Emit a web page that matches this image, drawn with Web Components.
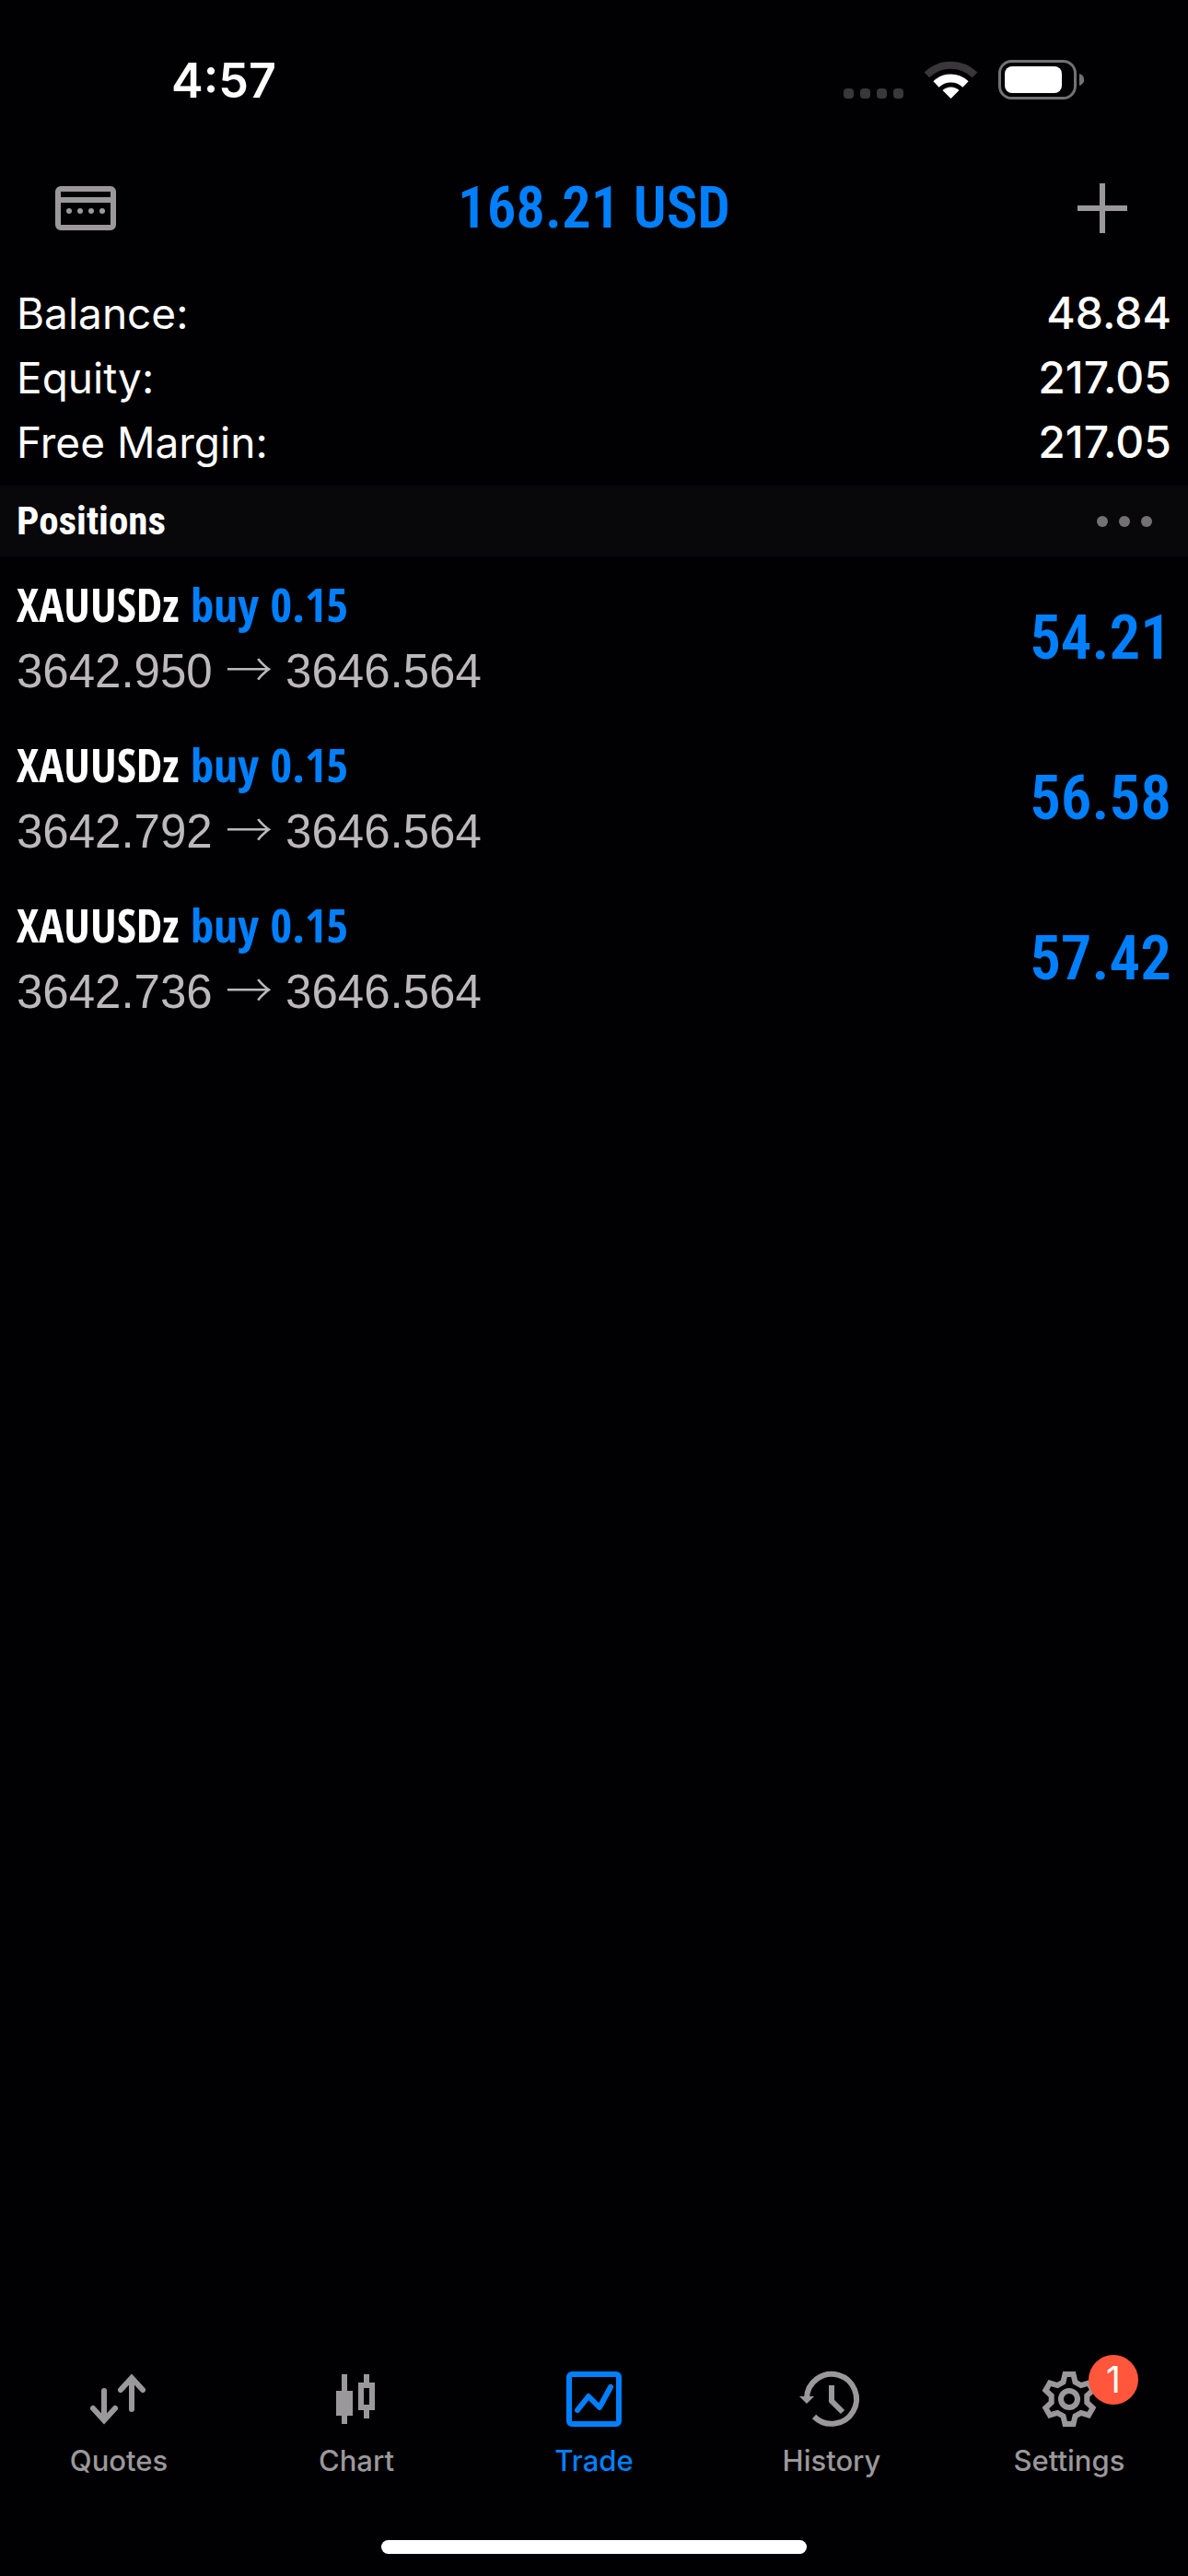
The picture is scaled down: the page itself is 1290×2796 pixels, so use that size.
<!DOCTYPE html>
<html lang="en">
<head>
  <meta charset="utf-8">
  <meta name="viewport" content="width=device-width, initial-scale=1">
  <title>Trade</title>
  <style>
    body {
      --bg: #010002;
      --bar: #08070a;
      --fg: #fff;
      --muted: #9a989b;
      --price: #bcb9bc;
      --accent: #0080ff;
      --badge: #ff563c;
      --side: 18px;
      --ui: Inter, "Liberation Sans", sans-serif;
      --condensed: "Open Sans Condensed", "Roboto Condensed", "Liberation Sans", sans-serif;
      --figures: "Roboto Condensed", "Liberation Sans", sans-serif;

      margin: 0;
      background: var(--bg);
      color: var(--fg);
      font-family: var(--ui);
    }
  </style>
</head>
<body>
  <trade-app>
    <status-bar slot="top">4:57</status-bar>
    <nav-bar slot="top">168.21 USD</nav-bar>

    <account-summary>
      <summary-row label="Balance:">48.84</summary-row>
      <summary-row label="Equity:">217.05</summary-row>
      <summary-row label="Free Margin:">217.05</summary-row>
    </account-summary>
    <section-bar>Positions</section-bar>
    <position-row symbol="XAUUSDz" side="buy 0.15" open="3642.950" current="3646.564">54.21</position-row>
    <position-row symbol="XAUUSDz" side="buy 0.15" open="3642.792" current="3646.564">56.58</position-row>
    <position-row symbol="XAUUSDz" side="buy 0.15" open="3642.736" current="3646.564">57.42</position-row>

    <tab-bar slot="bottom">
      <tab-item icon="quotes">Quotes</tab-item>
      <tab-item icon="chart">Chart</tab-item>
      <tab-item icon="trade" active>Trade</tab-item>
      <tab-item icon="history">History</tab-item>
      <tab-item icon="settings" badge="1">Settings</tab-item>
    </tab-bar>
  </trade-app>

  <script>
    const ICONS = {
      quotes: `
        <g fill="none" stroke="currentColor" stroke-width="6" stroke-linecap="round">
          <path d="M14 21v32M2 40l12 13 12-13"/>
          <path d="M44 41V7M32 20L44 7l12 13"/>
        </g>`,
      chart: `
        <path fill="currentColor" d="M14 3h6v18h6v27h-6v9h-6v-9H8V21h6z"/>
        <path fill="currentColor" fill-rule="evenodd" d="M38 3h6v9h6v30h-6v9h-6v-9h-6V12h6zM38 18v18h6V18z"/>`,
      trade: `
        <rect x="3" y="3" width="54" height="54" rx="3" fill="none" stroke="currentColor" stroke-width="6"/>
        <path d="M12 42l12-15 12 12 12-22" fill="none" stroke="currentColor" stroke-width="6" stroke-linecap="round" stroke-linejoin="round"/>`,
      history: `
        <g fill="none" stroke="currentColor" stroke-width="6">
          <path d="M3 29A27 27 0 1 1 11 49"/>
          <path d="M30 15v17l12 12"/>
        </g>
        <path fill="currentColor" d="M-5 27h16l-8 8z"/>`,
      settings: `
        <g fill="none" stroke="currentColor" stroke-width="6" transform="translate(30 30)">
          <path d="M-6.5-18.5L-4.5-27H4.5L6.5-18.5 12.8-14.9 21.1-17.4 25.6-9.6 19.3-3.6V3.6L25.6 9.6 21.1 17.4 12.8 14.9 6.5 18.5 4.5 27H-4.5L-6.5 18.5-12.8 14.9-21.1 17.4-25.6 9.6-19.3 3.6V-3.6L-25.6-9.6-21.1-17.4-12.8-14.9z"/>
          <circle r="9"/>
        </g>`
    };

    class TradeApp extends HTMLElement {
      constructor() {
        super();
        this.attachShadow({mode: 'open'});
      }

      connectedCallback() {
        this.shadowRoot.innerHTML = `
        <style>
          :host {
            display: flex;
            flex-direction: column;
            min-height: 100vh;
          }

          main {
            flex: 1;
          }
        </style>
        <header><slot name="top"></slot></header>
        <main><slot></slot></main>
        <slot name="bottom"></slot>
        `;
      }
    }

    class StatusBar extends HTMLElement {
      constructor() {
        super();
        this.attachShadow({mode: 'open'});
      }

      connectedCallback() {
        this.shadowRoot.innerHTML = `
        <style>
          :host {
            display: flex;
            justify-content: space-between;
            align-items: center;
            padding: 60px 113px 60px 186px;
            font-size: 52px;
            font-weight: 600;
            line-height: 56px;
          }

          .icons {
            display: flex;
            gap: 23px;
          }

          svg {
            display: block;
          }
        </style>
        <span><slot></slot></span>
        <span class="icons">
          <svg width="65" height="46" fill="#39373a">
            <rect y="31" width="11" height="11" rx="4"/>
            <rect x="18" y="31" width="11" height="11" rx="4"/>
            <rect x="36" y="31" width="11" height="11" rx="4"/>
            <rect x="54" y="31" width="11" height="11" rx="4"/>
          </svg>
          <svg width="57" height="46" fill="none">
            <path d="M2.5 16.5a37 37 0 0 1 52 0" stroke="#39373a" stroke-width="8"/>
            <path d="M12.5 26.5a23 23 0 0 1 32 0" stroke="#fff" stroke-width="9"/>
            <path d="M28.5 42L19.5 33a13 13 0 0 1 18 0z" fill="#fff"/>
          </svg>
          <svg width="93" height="46">
            <rect x="1.5" y="1.5" width="82" height="40" rx="13" fill="none" stroke="#737174" stroke-width="3"/>
            <rect x="7" y="7" width="62" height="29" rx="8" fill="#fff"/>
            <path d="M88 15c7 2 7 11 0 13z" fill="#737174"/>
          </svg>
        </span>
        `;
      }
    }

    class NavBar extends HTMLElement {
      constructor() {
        super();
        this.attachShadow({mode: 'open'});
      }

      connectedCallback() {
        this.shadowRoot.innerHTML = `
        <style>
          :host {
            display: grid;
            grid-template-columns: 1fr auto 1fr;
            padding: 23px 60px;
          }

          h1 {
            margin: 0;
            font: 600 63px/54px var(--figures);
            color: var(--accent);
          }

          button {
            display: block;
            padding: 0;
            border: 0;
            background: none;
            color: var(--muted);
          }

          button:first-of-type {
            justify-self: start;
          }

          button:last-of-type {
            justify-self: end;
          }

          svg {
            display: block;
          }
        </style>
        <button aria-label="Accounts">
          <svg width="66" height="54" fill="currentColor">
            <path fill-rule="evenodd" d="M6 3h54a6 6 0 0 1 6 6v36a6 6 0 0 1-6 6H6a6 6 0 0 1-6-6V9a6 6 0 0 1 6-6zM6 9v6h54V9zM6 21v24h54V21z"/>
            <circle cx="15" cy="30" r="3"/>
            <circle cx="27" cy="30" r="3"/>
            <circle cx="39" cy="30" r="3"/>
            <circle cx="51" cy="30" r="3"/>
          </svg>
        </button>
        <h1><slot></slot></h1>
        <button aria-label="New order">
          <svg width="66" height="54" stroke="currentColor" stroke-width="6">
            <path d="M33 0v54M6 27h54"/>
          </svg>
        </button>
        `;
      }
    }

    class AccountSummary extends HTMLElement {
      constructor() {
        super();
        this.attachShadow({mode: 'open'});
      }

      connectedCallback() {
        this.shadowRoot.innerHTML = `
        <style>
          :host {
            display: block;
            padding: 29px var(--side) 12px;
          }
        </style>
        <slot></slot>
        `;
      }
    }

    class SummaryRow extends HTMLElement {
      constructor() {
        super();
        this.attachShadow({mode: 'open'});
      }

      connectedCallback() {
        this.shadowRoot.innerHTML = `
        <style>
          :host {
            display: flex;
            justify-content: space-between;
            font-size: 46px;
            line-height: 70px;
          }

          .value {
            font-size: 48px;
            font-weight: 500;
          }
        </style>
        <span>${this.getAttribute('label')}</span>
        <span class="value"><slot></slot></span>
        `;
      }
    }

    class SectionBar extends HTMLElement {
      constructor() {
        super();
        this.attachShadow({mode: 'open'});
      }

      connectedCallback() {
        this.shadowRoot.innerHTML = `
        <style>
          :host {
            display: flex;
            justify-content: space-between;
            align-items: center;
            padding: 0 39px 0 var(--side);
            background: var(--bar);
          }

          h2 {
            margin: 0;
            font: 700 43px/77px var(--figures);
          }

          button {
            padding: 0;
            border: 0;
            background: none;
            color: #737174;
          }

          svg {
            display: block;
          }
        </style>
        <h2><slot></slot></h2>
        <button aria-label="More">
          <svg width="60" height="12" fill="currentColor">
            <circle cx="6" cy="6" r="6"/>
            <circle cx="30" cy="6" r="6"/>
            <circle cx="54" cy="6" r="6"/>
          </svg>
        </button>
        `;
      }
    }

    class PositionRow extends HTMLElement {
      constructor() {
        super();
        this.attachShadow({mode: 'open'});
      }

      connectedCallback() {
        this.shadowRoot.innerHTML = `
        <style>
          :host {
            display: flex;
            justify-content: space-between;
            align-items: center;
            padding: 14px var(--side) 12px;
          }

          p {
            margin: 0;
          }

          .title {
            font: 600 51px/74px var(--condensed);
          }

          .side,
          .profit {
            color: var(--accent);
          }

          .prices {
            font: 51px/74px "Liberation Sans", sans-serif;
            color: var(--price);
          }

          .arrow {
            font-family: "Noto Sans CJK JP", sans-serif;
            font-weight: 300;
            line-height: 1;
          }

          .profit {
            font: 600 67px/74px var(--figures);
          }
        </style>
        <div>
          <p class="title">${this.getAttribute('symbol')} <span class="side">${this.getAttribute('side')}</span></p>
          <p class="prices">${this.getAttribute('open')} <span class="arrow">→</span> ${this.getAttribute('current')}</p>
        </div>
        <span class="profit"><slot></slot></span>
        `;
      }
    }

    class TabBar extends HTMLElement {
      constructor() {
        super();
        this.attachShadow({mode: 'open'});
      }

      connectedCallback() {
        this.shadowRoot.innerHTML = `
        <style>
          :host {
            display: block;
            padding-bottom: 24px;
          }

          nav {
            display: grid;
            grid-template-columns: repeat(5, 1fr);
          }

          .home {
            width: 462px;
            height: 15px;
            margin: 68px auto 0;
            border-radius: 8px;
            background: var(--fg);
          }
        </style>
        <nav><slot></slot></nav>
        <div class="home"></div>
        `;
      }
    }

    class TabItem extends HTMLElement {
      constructor() {
        super();
        this.attachShadow({mode: 'open'});
      }

      connectedCallback() {
        const icon = this.getAttribute('icon');
        const badge = this.getAttribute('badge');

        this.shadowRoot.innerHTML = `
        <style>
          :host {
            display: block;
            color: var(--muted);
          }

          :host([active]) {
            color: var(--accent);
          }

          a {
            display: flex;
            flex-direction: column;
            align-items: center;
            gap: 19px;
            color: inherit;
            font-size: 31px;
            font-weight: 500;
            line-height: 36px;
            text-decoration: none;
          }

          .icon {
            position: relative;
          }

          svg {
            display: block;
            overflow: visible;
          }

          .badge {
            position: absolute;
            top: -18px;
            left: 51px;
            width: 54px;
            border-radius: 50%;
            background: var(--badge);
            color: var(--fg);
            font-size: 39px;
            font-weight: 400;
            line-height: 54px;
            text-align: center;
          }
        </style>
        <a href="#${icon}">
          <span class="icon">
            <svg width="60" height="60">${ICONS[icon]}</svg>
            ${badge ? `<span class="badge">${badge}</span>` : ''}
          </span>
          <slot></slot>
        </a>
        `;
      }
    }

    customElements.define('trade-app', TradeApp);
    customElements.define('status-bar', StatusBar);
    customElements.define('nav-bar', NavBar);
    customElements.define('account-summary', AccountSummary);
    customElements.define('summary-row', SummaryRow);
    customElements.define('section-bar', SectionBar);
    customElements.define('position-row', PositionRow);
    customElements.define('tab-bar', TabBar);
    customElements.define('tab-item', TabItem);
  </script>
</body>
</html>
